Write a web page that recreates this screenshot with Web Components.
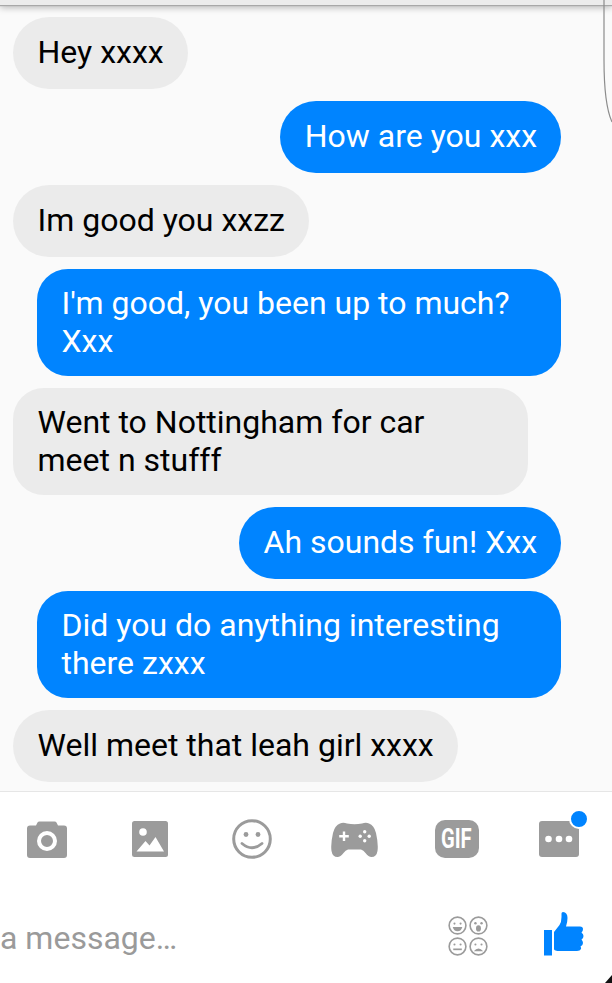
<!DOCTYPE html>
<html>
<head>
<meta charset="utf-8">
<style>
  html, body { margin: 0; padding: 0; background: #fff; }
  body { font-family: Roboto, "Liberation Sans", sans-serif; }
</style>
</head>
<body>
<chat-screen>
  <chat-bubble>Hey xxxx</chat-bubble>
  <chat-bubble mine>How are you xxx</chat-bubble>
  <chat-bubble>Im good you xxzz</chat-bubble>
  <chat-bubble mine lines="2">I'm good, you been up to much? Xxx</chat-bubble>
  <chat-bubble lines="2">Went to Nottingham for car meet n stufff</chat-bubble>
  <chat-bubble mine>Ah sounds fun! Xxx</chat-bubble>
  <chat-bubble mine lines="2">Did you do anything interesting there zxxx</chat-bubble>
  <chat-bubble>Well meet that leah girl xxxx</chat-bubble>
</chat-screen>
<chat-composer></chat-composer>

<script>
class ChatScreen extends HTMLElement {
  constructor() {
    super();
    this.attachShadow({ mode: 'open' });
    this.shadowRoot.innerHTML = `
      <style>
        :host {
          display: block;
          position: relative;
          height: 791px;
          background: #fafafa;
          overflow: hidden;
        }
        .top {
          height: 5px;
          background: #ececec;
          box-shadow: 0 1px 1px #a8a8a8, 0 2px 7px rgba(0, 0, 0, 0.35);
        }
        .list {
          display: flex;
          flex-direction: column;
          gap: 12px;
          padding: 12px 51px 0 13px;
        }
        .edge {
          position: absolute;
          top: 0;
          left: 603px;
        }
      </style>
      <div class="top"></div>
      <div class="list"><slot></slot></div>
      <svg class="edge" width="9" height="124" viewBox="0 0 9 124">
        <path d="M1 0 V60 C1 85 3.500 110 9 122" fill="none" stroke="#8c8c8c" stroke-width="1.200"/>
      </svg>
    `;
  }
}

class ChatBubble extends HTMLElement {
  constructor() {
    super();
    this.attachShadow({ mode: 'open' });
    this.shadowRoot.innerHTML = `
      <style>
        :host {
          display: block;
          align-self: flex-start;
          box-sizing: border-box;
          max-width: 515px;
          padding: 17px 24px 17.5px 24.500px;
          border-radius: 36px;
          background: #ebebeb;
          color: #000;
          font-size: 32px;
          line-height: 37.500px;
        }
        :host([mine]) {
          align-self: flex-end;
          max-width: 524px;
          background: #0084ff;
          color: #fff;
        }
        :host([lines="2"]) {
          padding-top: 16px;
          padding-bottom: 16px;
          width: 100%;
          border-radius: 31px;
        }
        :host([lines="2"]:not([mine])) {
          padding-right: 40px;
        }
      </style>
      <slot></slot>
    `;
  }
}

const GREY = '#9b9b9b';

const ICONS = {
  camera: `<svg width="40" height="37" viewBox="0 0 40 37">
      <path fill="${GREY}" d="M9 4.500 L10.500 1.500 Q11 0.500 12.500 0.500 H27.500 Q29 0.500 29.500 1.500 L31 4.500 H37 Q40 4.500 40 7.500 V34 Q40 37 37 37 H3 Q0 37 0 34 V7.500 Q0 4.500 3 4.500 Z"/>
      <circle cx="20" cy="20" r="8" fill="none" stroke="#fff" stroke-width="4"/>
    </svg>`,
  photo: `<svg width="36" height="36" viewBox="0 0 36 36">
      <rect width="36" height="36" rx="2.500" fill="${GREY}"/>
      <circle cx="11" cy="11" r="3.800" fill="#fff"/>
      <path fill="#fff" d="M4.500 30.500 L13.500 20 L17.500 24.500 L23.500 16 L32 30.500 Z"/>
    </svg>`,
  smile: `<svg width="40" height="40" viewBox="0 0 40 40">
      <circle cx="20" cy="20" r="18.300" fill="none" stroke="${GREY}" stroke-width="3"/>
      <circle cx="14" cy="15.500" r="2.400" fill="${GREY}"/>
      <circle cx="26" cy="15.500" r="2.400" fill="${GREY}"/>
      <path d="M10 24.500 Q20 33 30 24.500" fill="none" stroke="${GREY}" stroke-width="2.800" stroke-linecap="round"/>
    </svg>`,
  game: `<svg width="47" height="35" viewBox="0 0 47 35">
      <path fill="${GREY}" d="M9 1.500 Q12 0 16 1.500 Q23.500 3 31 1.500 Q35 0 38 1.500 Q43 3 45 11 Q47.500 22 46.500 29 Q45.500 35 40.500 35 Q37.500 35 34.500 31 Q32.500 28 30 27.500 H17 Q14.500 28 12.500 31 Q9.500 35 6.500 35 Q1.500 35 0.500 29 Q-0.500 22 2 11 Q4 3 9 1.500 Z"/>
      <path d="M13 9.500 V19 M8.200 14.300 H17.800" stroke="#fff" stroke-width="2.400" fill="none"/>
      <circle cx="33.700" cy="9.800" r="1.700" fill="#fff"/>
      <circle cx="33.700" cy="18.800" r="1.700" fill="#fff"/>
      <circle cx="29.200" cy="14.300" r="1.700" fill="#fff"/>
      <circle cx="38.200" cy="14.300" r="1.700" fill="#fff"/>
    </svg>`,
  gif: `<span class="gif"><span>GIF</span></span>`,
  more: `<svg width="40" height="36" viewBox="0 0 40 36">
      <rect width="40" height="36" rx="3" fill="${GREY}"/>
      <circle cx="9.500" cy="18" r="3.300" fill="#fff"/>
      <circle cx="20" cy="18" r="3.300" fill="#fff"/>
      <circle cx="30" cy="18" r="3.300" fill="#fff"/>
    </svg>`
};

class ToolIcon extends HTMLElement {
  constructor() {
    super();
    this.attachShadow({ mode: 'open' });
  }

  connectedCallback() {
    this.shadowRoot.innerHTML = `
      <style>
        :host {
          display: flex;
          align-items: center;
          justify-content: center;
          position: relative;
          width: 102.400px;
        }
        svg { display: block; }
        .gif {
          display: flex;
          align-items: center;
          justify-content: center;
          width: 44px;
          height: 38px;
          border-radius: 10px;
          background: ${GREY};
          color: #fff;
          font-size: 28px;
          font-weight: 700;
          line-height: 38px;
        }
        .gif span { display: block; transform: scaleX(0.72); }
        .badge {
          position: absolute;
          left: 61px;
          top: 17px;
          width: 16px;
          height: 16px;
          border-radius: 50%;
          background: #0084ff;
          border: 2px solid #fff;
        }
      </style>
      ${ICONS[this.getAttribute('name')]}
      ${this.hasAttribute('badge') ? '<span class="badge"></span>' : ''}
    `;
  }
}

class ChatComposer extends HTMLElement {
  constructor() {
    super();
    this.attachShadow({ mode: 'open' });
    this.shadowRoot.innerHTML = `
      <style>
        :host {
          display: block;
          position: relative;
          height: 192px;
          background: #fff;
          border-top: 1px solid #e6e6e6;
          box-sizing: border-box;
          overflow: hidden;
        }
        .tools {
          display: flex;
          height: 94px;
          margin-left: -4px;
        }
        .input {
          display: flex;
          align-items: center;
          height: 92px;
          padding-top: 6px;
          box-sizing: border-box;
        }
        .text {
          flex: 1;
          color: #9a9a9a;
          font-size: 32px;
          line-height: 38px;
          margin-top: 6px;
        }
        .faces { margin-right: 56px; margin-top: 2px; display: block; }
        .like { margin-right: 28px; margin-bottom: 2px; display: block; }
        .corner {
          position: absolute;
          right: 0;
          bottom: 0;
          width: 0;
          height: 0;
          border-left: 7px solid transparent;
          border-bottom: 8px solid #111;
        }
      </style>
      <div class="tools">
        <tool-icon name="camera"></tool-icon>
        <tool-icon name="photo"></tool-icon>
        <tool-icon name="smile"></tool-icon>
        <tool-icon name="game"></tool-icon>
        <tool-icon name="gif"></tool-icon>
        <tool-icon name="more" badge></tool-icon>
      </div>
      <div class="input">
        <span class="text">a message…</span>
        <svg class="faces" width="40" height="40" viewBox="0 0 42 42" fill="none" stroke="${GREY}" stroke-width="1.700">
          <circle cx="10" cy="10" r="8.800"/>
          <circle cx="6.800" cy="8" r="1.100" fill="${GREY}" stroke="none"/>
          <circle cx="13.200" cy="8" r="1.100" fill="${GREY}" stroke="none"/>
          <path d="M5 11.500 H15 Q14 16 10 16 Q6 16 5 11.500 Z" fill="${GREY}" stroke="none"/>
          <circle cx="32" cy="10" r="8.800"/>
          <circle cx="28.800" cy="7.500" r="1.300" fill="${GREY}" stroke="none"/>
          <circle cx="35.200" cy="7.500" r="1.300" fill="${GREY}" stroke="none"/>
          <ellipse cx="32" cy="13" rx="2.600" ry="3.300" fill="${GREY}" stroke="none"/>
          <circle cx="10" cy="32" r="8.800"/>
          <circle cx="6.800" cy="30" r="1.100" fill="${GREY}" stroke="none"/>
          <circle cx="13.200" cy="30" r="1.100" fill="${GREY}" stroke="none"/>
          <path d="M5.500 35 H14.500" stroke-width="1.800"/>
          <circle cx="32" cy="32" r="8.800"/>
          <circle cx="28.800" cy="30" r="1.100" fill="${GREY}" stroke="none"/>
          <circle cx="35.200" cy="30" r="1.100" fill="${GREY}" stroke="none"/>
          <path d="M27 37 Q32 31.500 37 37 Z" fill="${GREY}" stroke="none"/>
        </svg>
        <svg class="like" width="40" height="44" viewBox="0 0 40 44">
          <rect x="0" y="18" width="8" height="25.500" fill="#0084ff"/>
          <path fill="#0084ff" d="M10 20 L15.500 13 Q17.500 10 17.500 5 V1.500 Q17.500 0 19 0 Q23.500 0.500 23.500 6 Q23.500 10 22 14.500 H36 Q39 14.500 39 17 Q39 19.500 37.500 20.500 Q39.500 22 39.500 24 Q39.500 26.500 37.500 27.500 Q39 29 39 31 Q39 33 36.500 34.500 Q37.500 36 37 37 Q36 39 33 39 H16 Q10 39 10 37 Z"/>
        </svg>
        <span class="corner"></span>
      </div>
    `;
  }
}

customElements.define('tool-icon', ToolIcon);
customElements.define('chat-bubble', ChatBubble);
customElements.define('chat-screen', ChatScreen);
customElements.define('chat-composer', ChatComposer);
</script>
</body>
</html>
